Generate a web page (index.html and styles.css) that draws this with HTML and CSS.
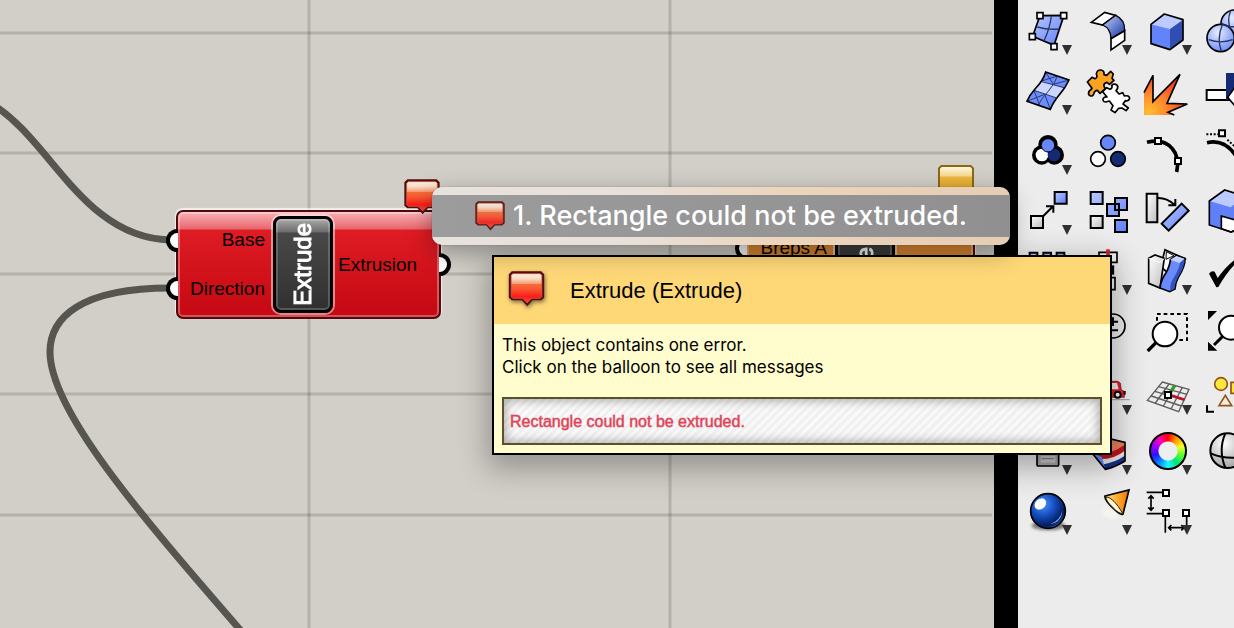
FILE: index.html
```html
<!DOCTYPE html>
<html lang="en">
<head>
<meta charset="utf-8">
<title>Extrude</title>
<link rel="stylesheet" href="styles.css">
</head>
<body>
<svg class="defs" aria-hidden="true">
  <defs>
    <linearGradient id="red" x1="0" y1="0" x2="0" y2="1">
      <stop offset="0" stop-color="#fff3e4"/><stop offset=".17" stop-color="#f8dcc5"/><stop offset=".34" stop-color="#fb9b70"/>
      <stop offset=".36" stop-color="#f66c38"/><stop offset=".55" stop-color="#fa5230"/><stop offset=".78" stop-color="#fb1d17"/><stop offset="1" stop-color="#ef4b3d"/>
    </linearGradient>
    <linearGradient id="gold" x1="0" y1="0" x2="0" y2="1">
      <stop offset="0" stop-color="#fffbe6"/><stop offset=".28" stop-color="#f6dc93"/><stop offset=".34" stop-color="#eeb83f"/><stop offset="1" stop-color="#d99a1c"/>
    </linearGradient>
    <linearGradient id="blue" x1="0" y1="0" x2="1" y2="1">
      <stop offset="0" stop-color="#b9c8ff"/><stop offset="1" stop-color="#5f80f8"/>
    </linearGradient>
    <linearGradient id="gray" x1="0" y1="0" x2="1" y2="1">
      <stop offset="0" stop-color="#fff"/><stop offset="1" stop-color="#bdbdbd"/>
    </linearGradient>
    <linearGradient id="bend" x1="0" y1="0" x2="1" y2="1">
      <stop offset="0" stop-color="#c9d5ff"/><stop offset="1" stop-color="#0e309c"/>
    </linearGradient>
    <linearGradient id="cone" x1="0" y1="0" x2="1" y2="0">
      <stop offset="0" stop-color="#ffe27a"/><stop offset=".55" stop-color="#fca82c"/><stop offset="1" stop-color="#e87508"/>
    </linearGradient>
    <radialGradient id="fire" gradientUnits="userSpaceOnUse" cx="405" cy="335" r="120">
      <stop offset="0" stop-color="#ffbd2e"/><stop offset=".5" stop-color="#ff812c"/><stop offset="1" stop-color="#f5331d"/>
    </radialGradient>
    <radialGradient id="orb" cx=".35" cy=".3" r=".75">
      <stop offset="0" stop-color="#4d94ff"/><stop offset=".45" stop-color="#164fc0"/><stop offset=".85" stop-color="#031a5a"/><stop offset="1" stop-color="#1c56ad"/>
    </radialGradient>
    <radialGradient id="pale" cx=".4" cy=".3" r=".8">
      <stop offset="0" stop-color="#e6edff"/><stop offset="1" stop-color="#5f80f8"/>
    </radialGradient>
    <radialGradient id="silver" cx=".4" cy=".3" r=".8">
      <stop offset="0" stop-color="#fff"/><stop offset="1" stop-color="#999"/>
    </radialGradient>
    <symbol id="balloon" viewBox="0 0 108 108">
      <path d="M10 1H98L107 10V80L98 88H72L56 106 40 88H10L1 80V10Z" fill="#501010"/>
      <path d="M13 8H95L100 13V77L95 82H70L56 96 42 82H13L8 77V13Z" fill="url(#red)" stroke="#e85a45" stroke-width="2"/>
    </symbol>
    <symbol id="balloon-gold" viewBox="0 0 108 108">
      <path d="M10 3H98L105 10V80L98 88H72L56 105 40 88H10L3 80V10Z" fill="url(#gold)" stroke="#8b6814" stroke-width="6"/>
    </symbol>
  </defs>
</svg>

<main class="app">
  <section class="canvas">
    <svg class="wires" aria-hidden="true">
      <g class="grid-lines">
        <path d="M309 0V2000M670 0V2000"/>
        <path d="M0 33H4000M0 153H4000M0 274H4000M0 394H4000M0 515H4000"/>
      </g>
      <path class="wire" d="M-10 103 C50 137 82 238 170 240"/>
      <path class="wire" d="M170 288C80 288 50 318 50 352C50 410 138 512 242 632"/>
    </svg>

    <article class="node node-error">
      <i class="grip grip-in grip-first"></i><i class="grip grip-in grip-last"></i><i class="grip grip-out"></i>
      <div class="ports ports-in"><span>Base</span><span>Direction</span></div>
      <div class="capsule"><span>Extrude</span></div>
      <div class="ports"><span>Extrusion</span></div>
    </article>
    <svg class="flag flag-error"><use href="#balloon"/></svg>

    <article class="node node-warning">
      <i class="grip grip-in grip-last"></i>
      <div class="ports ports-in"><span>Breps A</span></div>
      <div class="capsule"><span>e</span></div>
      <div class="ports"></div>
    </article>
    <svg class="flag flag-warning"><use href="#balloon-gold"/></svg>
  </section>

  <aside class="palette" aria-label="Tools">
    <button class="tool more" aria-label="Surface from points"><svg viewBox="12 3 180 180">
      <path d="M78 47L150 46 120 136 56 109Z" fill="url(#blue)" stroke="#000" stroke-width="5"/>
      <path d="M112 48Q108 85 90 122M70 81Q100 90 136 87" fill="none" stroke="#26365e" stroke-width="4"/>
      <path d="M69 38h18v18H69ZM140 38h18v18h-18ZM46 101h18v18H46ZM111 131h18v18h-18Z" fill="#fff" stroke="#000" stroke-width="5"/></svg></button>
    <button class="tool more" aria-label="Fillet surface"><svg viewBox="192 3 180 180">
      <path d="M232 67L272 37 305 46 266 75Z" fill="#fff" stroke="#000" stroke-width="5"/>
      <path d="M266 75L305 46Q333 58 332 92L291 116Q290 85 266 75Z" fill="url(#bend)" stroke="#000" stroke-width="4"/>
      <path d="M291 116L332 92V121L291 150Z" fill="#fff" stroke="#000" stroke-width="5"/></svg></button>
    <button class="tool more" aria-label="Box"><svg viewBox="372 3 180 180">
      <path d="M411 73L451 42 507 59 468 87Z" fill="#bccaff"/><path d="M411 73L468 87V149L411 131Z" fill="#6283fa"/><path d="M468 87L507 59V120L468 149Z" fill="#304db0"/>
      <path d="M411 73L451 42 507 59V120L468 149 411 131Z" fill="none" stroke="#000" stroke-width="5" stroke-linejoin="round"/></svg></button>
    <button class="tool" aria-label="Boolean union"><svg viewBox="552 3 180 180">
      <circle cx="662" cy="71" r="41" fill="url(#pale)" stroke="#000" stroke-width="5"/>
      <circle cx="620" cy="114" r="41" fill="url(#pale)" stroke="#000" stroke-width="5"/>
      <path d="M584 119Q620 132 656 119M625 74Q608 114 622 154M622 70Q645 82 662 80M650 32Q638 60 650 90" fill="none" stroke="#26365e" stroke-width="4"/></svg></button>

    <button class="tool more" aria-label="Patch surface"><svg viewBox="12 183 180 180">
      <path d="M95 216L165 240Q155 262 137 283 117 308 109 328L39 304Q46 286 63 267 87 243 95 216Z" fill="#6e8dfb"/>
      <path d="M83 243L153 266 128 294 60 271Z" fill="#cbd7ff"/>
      <path d="M130 228Q124 249 102 275 78 301 74 316M83 245L151 263M60 271L128 294M95 216L118 253 165 240M83 243L130 228M60 271L76 314M39 304L92 283 109 328" fill="none" stroke="#293a73" stroke-width="3"/>
      <path d="M95 216L165 240Q155 262 137 283 117 308 109 328L39 304Q46 286 63 267 87 243 95 216Z" fill="none" stroke="#000" stroke-width="5"/></svg></button>
    <button class="tool" aria-label="Join"><svg viewBox="192 183 180 180">
      <path d="M220 246L234 232 243 236Q252 233 247 222 249 209 261 210 272 212 270 224L278 226 290 214 298 222 294 235 300 241 286 253 279 247Q268 250 270 259L274 266 258 280 250 271Q243 270 240 280 237 291 228 287 221 284 225 274L234 265Z" fill="#fca31f" stroke="#000" stroke-width="5" stroke-linejoin="round"/>
      <path d="M266 275L278 263 288 268Q297 264 293 256 300 249 310 256 314 264 306 272L315 282 326 278 331 288Q345 285 347 295 344 305 334 302L327 312 343 324 336 332 324 324 314 325 303 338 291 330 297 317 286 303 275 306Q264 305 268 295 273 289 279 291Z" fill="#fff" stroke="#000" stroke-width="5" stroke-linejoin="round"/></svg></button>
    <button class="tool" aria-label="Explode"><svg viewBox="372 183 180 180">
      <path d="M390 275L417 226V305L498 223 459 310 520 312 462 337 481 345H390Z" fill="url(#fire)"/>
      <path d="M390 278L417 226V305L498 223 459 310 520 312 462 337 481 345" fill="none" stroke="#000" stroke-width="5"/></svg></button>
    <button class="tool" aria-label="Trim"><svg viewBox="552 183 180 180">
      <path d="M578 270H660V300H578Z" fill="#fff" stroke="#000" stroke-width="6"/><path d="M636 219H700V300H636Z" fill="#142a75"/><path d="M662 263L641 292 665 320" fill="#fff" stroke="#000" stroke-width="5"/></svg></button>

    <button class="tool more" aria-label="Group"><svg viewBox="12 3 180 180">
      <g fill="#000"><circle cx="102" cy="74" r="29"/><circle cx="83" cy="105" r="29"/><circle cx="121" cy="105" r="29"/></g>
      <circle cx="84" cy="105" r="19" fill="#fff"/><circle cx="120" cy="105" r="19" fill="#142a75"/><circle cx="102" cy="76" r="20" fill="#6786fb" stroke="#000" stroke-width="3"/></svg></button>
    <button class="tool" aria-label="Ungroup"><svg viewBox="192 3 180 180">
      <g stroke="#000" stroke-width="5"><circle cx="282" cy="68" r="22" fill="#6786fb"/><circle cx="252" cy="117" r="22" fill="#fff"/><circle cx="312" cy="117" r="22" fill="#142a75"/></g></svg></button>
    <button class="tool" aria-label="Edit curve"><svg viewBox="372 3 180 180">
      <path d="M399 67Q448 54 474 85 498 112 488 156" fill="none" stroke="#000" stroke-width="11"/>
      <path d="M423 54h18v18h-18ZM483 114h18v18h-18Z" fill="#fff" stroke="#000" stroke-width="6"/></svg></button>
    <button class="tool" aria-label="Edit control points"><svg viewBox="552 3 180 180">
      <path d="M579 68Q630 56 665 106" fill="none" stroke="#000" stroke-width="11"/><path d="M577 43H612M640 59L665 82" fill="none" stroke="#000" stroke-width="6" stroke-dasharray="6 5"/><path d="M615 31h18v18h-18Z" fill="#fff" stroke="#000" stroke-width="6"/></svg></button>

    <button class="tool more" aria-label="Move"><svg viewBox="12 183 180 180">
      <path d="M51 288H87V324H51Z" fill="url(#gray)" stroke="#000" stroke-width="6"/><path d="M122 216H158V251H122Z" fill="url(#blue)" stroke="#000" stroke-width="6"/>
      <path d="M88 288L118 258M96 259H118V278" fill="none" stroke="#000" stroke-width="6"/></svg></button>
    <button class="tool" aria-label="Copy"><svg viewBox="192 183 180 180">
      <g fill="url(#blue)" stroke="#000" stroke-width="6"><path d="M230 216h36v36h-36ZM303 234h36v36h-36ZM279 252h36v36h-36ZM303 300h36v36h-36Z"/><path d="M230 288h36v36h-36Z" fill="url(#gray)"/></g></svg></button>
    <button class="tool" aria-label="Rotate"><svg viewBox="372 183 180 180">
      <path d="M398 221H430V307H398Z" fill="url(#gray)" stroke="#000" stroke-width="6"/><path d="M503 251L524 272 464 332 443 311Z" fill="url(#blue)" stroke="#000" stroke-width="6"/>
      <path d="M431 234Q458 233 481 254M463 256H484V237" fill="none" stroke="#000" stroke-width="6"/></svg></button>
    <button class="tool" aria-label="Boolean difference"><svg viewBox="552 183 180 180">
      <path d="M586 243L632 210 690 228V330L651 336 586 315Z" fill="#5f80f8"/><path d="M586 243L632 210 690 228 650 262Z" fill="#bccaff"/><path d="M622 288L665 300V330L651 336 622 326Z" fill="#fff" stroke="#000" stroke-width="5"/>
      <path d="M690 228L632 210 586 243V315L651 336 690 325" fill="none" stroke="#000" stroke-width="5"/></svg></button>

    <button class="tool" aria-label="Array"><svg viewBox="12 3 180 180">
      <path d="M47 38h23v23H47ZM88 38h23v23H88ZM128 38h23v23h-23Z" fill="url(#blue)" stroke="#000" stroke-width="6"/></svg></button>
    <button class="tool more" aria-label="Align"><svg viewBox="192 3 180 180">
      <path d="M255 37H309V67H255ZM262 113H303V149H262Z" fill="#f3f3f3" stroke="#000" stroke-width="5"/><path d="M282 28V110" stroke="#cf202c" stroke-width="11"/><path d="M297 76V104" stroke="#000" stroke-width="7"/></svg></button>
    <button class="tool more" aria-label="Bend"><svg viewBox="372 3 180 180">
      <path d="M453 29L514 57 475 110 440 80Z" fill="#fff" stroke="#000" stroke-width="5"/><path d="M457 35L480 47 456 58Z" fill="#fff" stroke="#000" stroke-width="3"/>
      <path d="M404 55L423 45 451 55 438 144 404 130Z" fill="url(#gray)" stroke="#000" stroke-width="5"/><path d="M404 55L437 68 451 56" fill="none" stroke="#fff" stroke-width="3"/>
      <path d="M487 46L513 55Q514 79 493 112 483 130 483 147L467 155 438 144Q440 121 457 97 468 76 469 59Z" fill="#6b8afa" stroke="#000" stroke-width="5"/>
      <path d="M469 59L487 48 511 56 496 69Z" fill="#c4d2ff"/><path d="M498 69L512 57Q512 79 493 110 482 130 481 147L469 152Q466 132 480 112 496 86 498 69Z" fill="#3152bd"/></svg></button>
    <button class="tool" aria-label="Check"><svg viewBox="552 3 180 180">
      <path d="M585 101Q593 91 602 95L611 114Q636 77 680 45V57Q644 86 613 141L607 142Z" fill="#000"/></svg></button>

    <button class="tool second" aria-label="Zoom in or out"><svg viewBox="192 183 180 180">
      <circle cx="297" cy="258" r="36" fill="none" stroke="#000" stroke-width="5"/><path d="M282 245H312M297 232V258M282 271H312" stroke="#000" stroke-width="6"/></svg></button>
    <button class="tool" aria-label="Zoom window"><svg viewBox="372 183 180 180">
      <path d="M429 242V222H519V300H489" fill="none" stroke="#000" stroke-width="6" stroke-dasharray="11 9"/>
      <path d="M401 333L429 305" stroke="#000" stroke-width="10"/><circle cx="453" cy="282" r="37" fill="#fff" stroke="#000" stroke-width="6"/></svg></button>
    <button class="tool" aria-label="Zoom extents"><svg viewBox="552 183 180 180">
      <path d="M582 213H609L582 240ZM582 305L610 332H582Z"/><path d="M600 315L626 289" stroke="#000" stroke-width="9"/><circle cx="651" cy="263" r="36" fill="#fff" stroke="#000" stroke-width="6"/></svg></button>

    <button class="tool more second" aria-label="Set view"><svg viewBox="192 3 180 180">
      <path d="M270 119H347" stroke="#999" stroke-width="3"/><path d="M270 64H311L319 69 322 90 331 94V112H270Z" fill="#e3202d" stroke="#650b10" stroke-width="2"/><path d="M285 69H309L314 88H285Z" fill="#f7eeee"/><path d="M329 93h6v11h-6Z"/><circle cx="311" cy="104" r="9" fill="#fff" stroke="#000" stroke-width="6"/></svg></button>
    <button class="tool more" aria-label="Construction plane"><svg viewBox="372 3 180 180">
      <path d="M445 66L525 88 494 155 400 121ZM465 72L424 129M485 77L448 138M505 82L471 147M434 80L519 103M423 94L510 121M412 108L502 138" fill="none" stroke="#5c5c5c" stroke-width="4"/>
      <path d="M466 104L512 119" stroke="#c90b20" stroke-width="7"/><path d="M465 102L482 75" stroke="#28a21c" stroke-width="8"/><path d="M453 96h18v18h-18Z" fill="#fff" stroke="#000" stroke-width="6"/></svg></button>
    <button class="tool" aria-label="Selection"><svg viewBox="552 3 180 180">
      <g fill="#ffe63d" stroke="#91541a" stroke-width="5"><circle cx="621" cy="72" r="19"/><path d="M651 67h30v33h-30Z"/><path d="M634 106L653 137H615Z" fill="#f8ece0"/></g><path d="M579 136V155H600" fill="none" stroke="#000" stroke-width="6"/></svg></button>

    <button class="tool more" aria-label="Properties"><svg viewBox="12 183 180 180">
      <rect x="69" y="240" width="65" height="78" rx="4" fill="#a8a8a8" stroke="#000" stroke-width="5"/><path d="M80 288H124V308H80Z" fill="#c8c8c8"/><path d="M83 296H119" stroke="#777" stroke-width="3"/></svg></button>
    <button class="tool more" aria-label="Layers"><svg viewBox="192 183 180 180">
      <path d="M235 280L290 237 333 245V260L280 290Z" fill="#e87f59"/><path d="M240 285Q295 282 332 254V275Q301 302 253 301Z" fill="#c4121d"/><path d="M250 297Q299 300 332 272V290Q302 315 262 317Z" fill="#e8e8e8"/><path d="M262 314Q305 307 332 287V305L275 328Z" fill="#142f86"/><path d="M237 280L274 328 264 291Z" fill="#668bff"/>
      <path d="M235 280L290 237 333 247V303Q306 320 274 328Z" fill="none" stroke="#000" stroke-width="5"/></svg></button>
    <button class="tool more" aria-label="Color"><span class="color-wheel"></span></button>
    <button class="tool" aria-label="Shade"><svg viewBox="552 183 180 180">
      <circle cx="641" cy="272" r="52" fill="url(#silver)" stroke="#000" stroke-width="6"/><path d="M634 220Q612 270 634 324M590 280Q635 300 692 290" fill="none" stroke="#000" stroke-width="6"/></svg></button>

    <button class="tool more" aria-label="Render"><svg viewBox="12 363 180 180">
      <ellipse class="soft" cx="103" cy="497" rx="50" ry="14" fill="#777"/>
      <circle cx="102" cy="453" r="52" fill="url(#orb)" stroke="#000" stroke-width="5"/><ellipse cx="79" cy="432" rx="19" ry="15" transform="rotate(-42 79 432)" fill="#fff"/><path d="M108 492Q139 482 145 452Q142 488 108 492Z" fill="#84b9ff"/></svg></button>
    <button class="tool more" aria-label="Spotlight"><svg viewBox="192 363 180 180">
      <ellipse class="soft" cx="286" cy="459" rx="26" ry="15" transform="rotate(25 286 459)" fill="#f5f4f0"/>
      <path d="M273 408L345 390 327 462Q321 467 302 449 270 420 273 408Z" fill="url(#cone)" stroke="#000" stroke-width="5"/><path d="M276 410Q299 413 326 460 315 462 296 442 275 422 276 410Z" fill="#fff4d5" stroke="#3d2503" stroke-width="3"/></svg></button>
    <button class="tool more" aria-label="Dimensions"><svg viewBox="372 363 180 180">
      <path d="M398 397H446M398 461H446M411 408V450M403 416L411 407 419 416M403 442L411 451 419 442M454 468V518M518 468V518M464 503H510M472 495L464 503 472 511M502 495L510 503 502 511" fill="none" stroke="#000" stroke-width="5"/>
      <path d="M447 390h18v18h-18ZM447 450h18v18h-18ZM507 450h18v18h-18Z" fill="#fff" stroke="#000" stroke-width="6"/></svg></button>
  </aside>
</main>

<section class="tooltip" role="tooltip">
  <header class="tooltip-head">
    <svg class="tooltip-icon"><use href="#balloon"/></svg>
    <h1>Extrude (Extrude)</h1>
  </header>
  <div class="tooltip-body">
    <p>This object contains one error.<br>Click on the balloon to see all messages</p>
    <div class="message">Rectangle could not be extruded.</div>
  </div>
</section>

<div class="menu" role="menu">
  <button class="menu-item" role="menuitem"><svg class="menu-icon"><use href="#balloon"/></svg>1. Rectangle could not be extruded.</button>
</div>
</body>
</html>
```

FILE: styles.css
```css
* { box-sizing: border-box; }
body { margin: 0; overflow: hidden; font-family: "Liberation Sans", Arial, sans-serif; color: #000; }
button { font: inherit; border: 0; padding: 0; background: none; }
.defs { position: absolute; width: 0; height: 0; }

.app { display: flex; height: 100vh; background: #000; }
.canvas { position: relative; flex: 1; min-width: 0; overflow: hidden; background: #d2cfc8; border-right: 2px solid #d2cfc8; }
.wires { display: block; width: 100%; height: 100%; }
.grid-lines { fill: none; stroke: #000; stroke-opacity: .14; stroke-width: 3; }
.wire { fill: none; stroke: #575550; stroke-width: 7; }

/* Components on the free canvas */
.node {
  position: absolute; display: flex; height: 109px; padding: 4px; font-size: 19px;
  border: 2px solid #500a0e; border-radius: 7px;
  box-shadow: inset 0 0 0 2px #ffffff4d, 0 -1px 1px 1px #ffffffb0;
}
.node-error { left: 176px; top: 210px; width: 265px; background: linear-gradient(#f7b3b7, #e9666d 17px, #de1c24 18px, #c50812); }
.node-warning { left: 745px; top: 194px; width: 230px; height: 119px; background: #e08a33; }
.ports { flex: 1; display: flex; flex-direction: column; justify-content: space-around; padding: 0 5px; line-height: 24px; }
.ports-in { flex: 0 0 90px; padding: 0 8px; text-align: right; }
.node-warning .ports-in { flex-basis: 84px; justify-content: center; padding-bottom: 12px; }
.capsule {
  flex: 0 0 60px; display: flex; align-items: center; justify-content: center;
  color: #fff; font-size: 24px; -webkit-text-stroke: 1px #fff;
  border: 3px solid #000; border-radius: 8px;
  background: linear-gradient(#aaa, #6c6c6c 13px, #484848 14px, #303030);
  box-shadow: 0 0 0 2px #ffffff80, inset 0 0 0 2px #ffffff30;
}
.capsule span { writing-mode: vertical-rl; transform: rotate(180deg); line-height: 24px; }
.grip { position: absolute; width: 12px; height: 23px; border: 4px solid #000; background: #fff; }
.grip-in { left: -12px; border-right: 0; border-radius: 12px 0 0 12px; }
.grip-out { right: -12px; top: 41px; border-left: 0; border-radius: 0 12px 12px 0; }
.grip-first { top: 17px; }
.grip-last { top: 65px; }
.node-warning .grip-last { top: 41px; }
.flag { position: absolute; width: 36px; height: 36px; }
.flag-error { left: 404px; top: 179px; }
.flag-warning { left: 938px; top: 165px; }

/* Tool palette */
.palette {
  flex: 0 0 216px; margin-left: 24px; padding-top: 1px; overflow: hidden; background: #ececec;
  display: grid; grid-template-columns: repeat(4, 60px); grid-auto-rows: 60px; align-content: start;
}
.tool { position: relative; display: grid; place-items: center; }
.tool svg { display: block; width: 60px; height: 60px; }
.second { grid-column: 2; }
.more::after {
  content: ""; position: absolute; left: 44px; top: 44px; width: 10px; height: 10px;
  background: #303030; clip-path: polygon(0 0, 100% 0, 50% 100%);
}
.soft { filter: blur(5px); }
.color-wheel {
  width: 38px; height: 38px; border: 2px solid #000; border-radius: 50%;
  background: radial-gradient(circle, #eee 9px, transparent 10px),
    conic-gradient(red, #ff9a00, #f4ff28, #54ff30, #00e676, #22f5ff, #008cff, #2914ff, #9800ff, #ff00b8, red);
}

/* Error details */
.tooltip {
  position: absolute; left: 492px; top: 255px; width: 620px;
  background: #fffccd; border: 2px solid #000; box-shadow: 0 9px 28px 4px #0000004d;
}
.tooltip-head { display: flex; align-items: center; gap: 25px; height: 67px; padding-left: 14px; background: #fed777; }
.tooltip-head h1 { margin: 0; font-size: 22px; font-weight: 400; }
.tooltip-icon { width: 37px; height: 36px; margin-bottom: 4px; filter: drop-shadow(1px 2px 2px #00000080); }
.tooltip-body { padding: 10px 8px 8px; font: 17px/22px Inter, sans-serif; }
.tooltip-body p { margin: 0 0 19px; }
.message {
  height: 48px; padding: 0 6px; border: 2px solid #5f4e2b; color: #dd4357;
  font: 16px/46px "Liberation Sans", Arial, sans-serif; -webkit-text-stroke: 1px #dd435780;
  background: repeating-linear-gradient(135deg, #f9f9f9 0 3px, #f0f0f0 3px 6px);
  box-shadow: inset 0 0 10px 2px #0000004d;
}

/* Message menu */
.menu {
  position: absolute; left: 432px; top: 187px; width: 578px; padding: 8px 0; border-radius: 10px;
  background: linear-gradient(90deg, #e8e2dd, #e8e0d8 35%, #ecd5bd 60%, #e6cdb5);
  box-shadow: 0 0 1px #00000099, 0 7px 24px #00000059;
}
.menu-item {
  display: flex; align-items: center; gap: 8px; width: 100%; height: 42px; padding: 0 0 0 43px;
  color: #fff; font: 500 27px/42px Inter, sans-serif; white-space: nowrap;
  background: linear-gradient(90deg, #9c9c9c, #909090);
}
.menu-icon { width: 30px; height: 30px; opacity: .9; }
```
